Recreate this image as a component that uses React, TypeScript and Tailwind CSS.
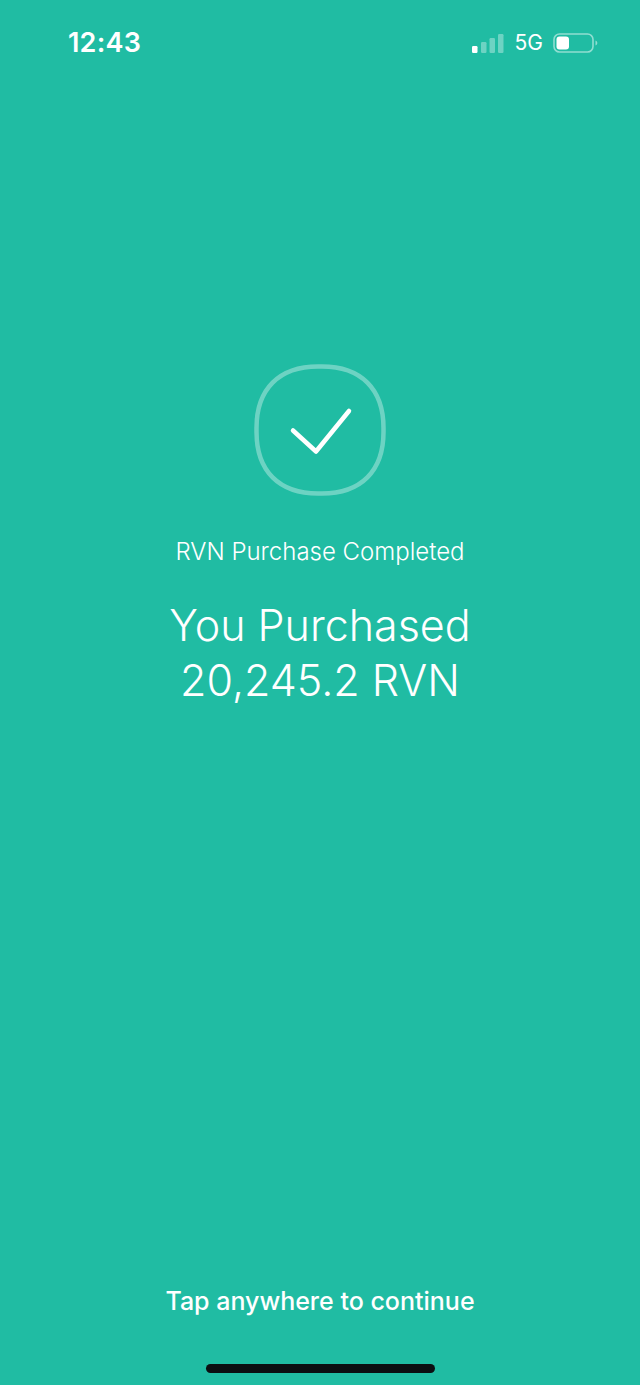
export default function App() {
  return (
    <div className="w-[640px] h-[1385px] bg-[#20bca3] text-white flex flex-col items-center overflow-hidden font-['Inter','Liberation_Sans',sans-serif]">
      <div className="w-full h-[364px] shrink-0">
        <div className="flex items-center justify-between pt-[26px] pl-[68px] pr-[42px]">
          <span className="text-[27px] leading-[33px] font-semibold tracking-[0.2px]">12:43</span>
          <div className="flex items-center mt-[1px]">
            <svg width="32" height="22" viewBox="0 0 32 22" className="mr-[11px]">
              <rect x="0" y="14" width="5.5" height="7" rx="1.2" fill="#fff" />
              <rect x="9" y="10" width="5.5" height="11" rx="1.2" fill="#fff" fillOpacity="0.35" />
              <rect x="17.5" y="6" width="5.5" height="15" rx="1.2" fill="#fff" fillOpacity="0.35" />
              <rect x="26" y="2" width="5.5" height="19" rx="1.2" fill="#fff" fillOpacity="0.35" />
            </svg>
            <span className="text-[21px] leading-[26px] mr-[10px]">5G</span>
            <svg width="45" height="22" viewBox="0 0 45 22">
              <rect x="1" y="2" width="39" height="18" rx="5.5" fill="none" stroke="#fff" strokeOpacity="0.5" strokeWidth="1.6" />
              <rect x="3.5" y="4.5" width="12.5" height="13" rx="3" fill="#fff" />
              <path d="M42.5 8.5c1.2.4 1.8 1.3 1.8 2.5s-.6 2.1-1.8 2.5z" fill="#fff" fillOpacity="0.5" />
            </svg>
          </div>
        </div>
      </div>
      <svg width="132" height="132" viewBox="0 0 132 132" className="shrink-0">
        <path d="M66 2.5h2C107 2.5 129.5 25 129.5 64v4c0 39-22.500 61.500-61.500 61.500h-4C25 129.500 2.500 107 2.500 68v-4C2.500 25 25 2.500 64 2.500z" fill="none" stroke="#fff" strokeOpacity="0.35" strokeWidth="4.500" />
        <path d="M39 66.500 L62 87.500 L95 47" fill="none" stroke="#fff" strokeWidth="4.500" strokeLinecap="round" strokeLinejoin="round" />
      </svg>
      <p className="mt-[41px] text-[24px] leading-[30px] font-light">RVN Purchase Completed</p>
      <h1 className="mt-[31px] text-center text-[43px] leading-[55px] font-light">
        You Purchased
        <br />
        20,245.2 RVN
      </h1>
      <div className="flex-1" />
      <p className="text-[25px] leading-[30px] font-medium mb-[48px]">Tap anywhere to continue</p>
      <div className="w-[229px] h-[9px] rounded-full bg-[#0b0f12] mb-[12px]" />
    </div>
  );
}
